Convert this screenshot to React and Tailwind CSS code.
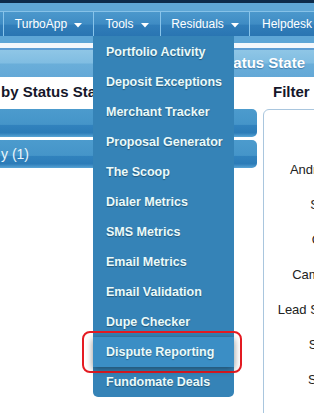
import React from 'react';

const navItems = [
  { label: 'TurboApp', width: 'w-[90px]', caret: true },
  { label: 'Tools', width: 'w-[67px]', caret: true },
  { label: 'Residuals', width: 'w-[89px]', caret: true },
];

const toolLinks = [
  'Portfolio Activity',
  'Deposit Exceptions',
  'Merchant Tracker',
  'Proposal Generator',
  'The Scoop',
  'Dialer Metrics',
  'SMS Metrics',
  'Email Metrics',
  'Email Validation',
  'Dupe Checker',
  'Dispute Reporting',
  'Fundomate Deals',
];

const filterLabels = ['Android ID:', 'Source:', 'Carrier:', 'Campaign:', 'Lead Source:', 'Sort By:', 'Service:'];

function Caret() {
  return (
    <svg width="8" height="5" viewBox="0 0 8 5" className="mt-[2px]">
      <polygon points="0,0 8,0 4,4.5" fill="#ffffff" />
    </svg>
  );
}

function Bar({ children }) {
  return (
    <div className="flex h-[28px] w-[257px] items-center rounded-r-[5px] bg-[linear-gradient(to_bottom,#4c9bcd_0%,#4595c9_55%,#3182bd_58%,#2c7cb8_85%,#58a4d5_100%)] text-[14px] text-[#eaf6fb]">
      {children}
    </div>
  );
}

export default function App() {
  return (
    <div className="relative h-[413px] w-[314px] overflow-hidden bg-white font-['Liberation_Sans',Arial,sans-serif]">
      <div className="h-[3px] bg-[#0d2b4a]" />
      <div className="h-[9px] border-b border-[#86c2e8] bg-[#5fa7d6]" />

      <nav className="flex h-[24px] bg-[linear-gradient(to_bottom,#4b98cc_0%,#3f8cc4_50%,#307db9_56%,#2a75b2_100%)] text-[12px] text-white">
        <div className="w-[4px] border-r border-[#88c4ea]" />
        {navItems.map((item) => (
          <div
            key={item.label}
            className={`flex ${item.width} items-center justify-center gap-[7px] border-r border-[#88c4ea]`}
          >
            <span>{item.label}</span>
            {item.caret && <Caret />}
          </div>
        ))}
        <div className="flex flex-1 items-center whitespace-nowrap pl-[12px]">Helpdesk</div>
      </nav>

      <div className="h-[7px] bg-[#5ea6d6]" />
      <div className="h-[5px] bg-[#f4f8fc]" />

      <header className="flex h-[29px] items-center justify-end border-t-2 border-[#5f9ed4] bg-[linear-gradient(to_bottom,#8fc6e6_0%,#80bde2_48%,#6aaed9_52%,#63a8d7_100%)] pr-[9px]">
        <span className="whitespace-nowrap text-[15px] font-bold text-white [text-shadow:0_1px_1px_rgba(40,90,140,0.6)]">
          Leads by Status State
        </span>
      </header>

      <div className="flex h-[31px] items-center">
        <div className="w-[263px] shrink-0 whitespace-nowrap pl-[1px] text-[15px] font-bold text-[#15172a]">
          by Status State
        </div>
        <div className="pl-[10px] text-[15px] font-bold text-[#15172a]">Filter</div>
      </div>

      <div className="flex">
        <div className="flex w-[257px] shrink-0 flex-col gap-[3px] pt-[1px]">
          <Bar />
          <Bar>
            <span className="pl-[1px]">y (1)</span>
          </Bar>
        </div>
        <div className="ml-[6px] mt-[1px] h-[320px] w-[130px] shrink-0 rounded-tl-[6px] border border-[#a9c6de] pt-[42px]">
          {filterLabels.map((label) => (
            <div key={label} className="flex h-[35px] w-[91px] items-center justify-end whitespace-nowrap text-[13px] text-[#222]">
              {label}
            </div>
          ))}
        </div>
      </div>

      <ul className="absolute left-[93px] top-[36px] w-[141px] rounded-b-[5px] bg-[#3583b7] pt-[1px]">
        {toolLinks.map((link) => {
          const active = link === 'Dispute Reporting';
          return (
            <li
              key={link}
              className={`relative flex h-[30px] items-center whitespace-nowrap pl-[13px] text-[12.5px] font-bold text-[#eafafa] [text-shadow:0_1px_1px_rgba(0,0,0,0.35)] ${
                active ? 'z-10 bg-[#3b8ec5] shadow-[0_2px_7px_rgba(0,0,0,0.45)]' : ''
              }`}
            >
              {link}
            </li>
          );
        })}
      </ul>

      <div className="absolute left-[82px] top-[331px] h-[42px] w-[160px] rounded-[8px] border-2 border-[#e51b22]" />
    </div>
  );
}
